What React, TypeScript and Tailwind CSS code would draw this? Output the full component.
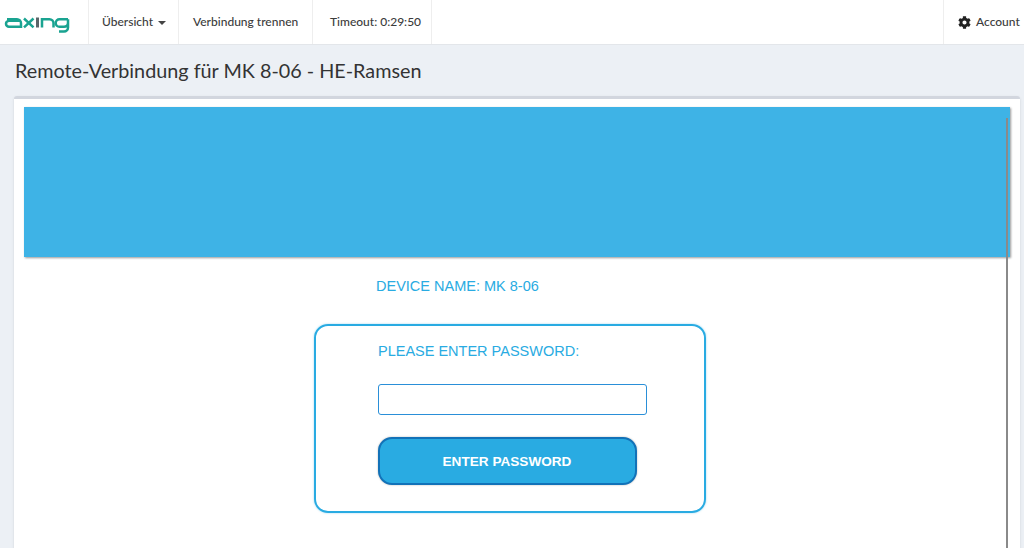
import type { ReactNode } from "react";
import { FaCog } from "react-icons/fa";

const navFont = "[font-family:'Lato',sans-serif]";

function AxingLogo() {
  return (
    <svg width="66" height="18" viewBox="0 0 66 18" fill="none" strokeWidth="2.5">
      {/* a */}
      <path d="M3 4.2h10a4 4 0 0 1 4 4v3.6H5a3 3 0 0 1 0-6h12" stroke="#1aa391" />
      {/* x */}
      <path d="M20 3.5l9.5 8.8M29.5 3.5L20 12.3" stroke="#1aa391" />
      {/* i */}
      <path d="M33.5 2.5v10" stroke="#5a6468" strokeWidth="3" />
      {/* n */}
      <path d="M38 12.5V4.2h7.5a4 4 0 0 1 4 4v4.3" stroke="#1aa391" />
      {/* g */}
      <path d="M64 4.2H55.5a3.8 3.8 0 0 0 0 7.6H60a4 4 0 0 0 4-4M64 4.2v8.3a4 4 0 0 1-4 4h-5" stroke="#1aa391" />
    </svg>
  );
}

function NavItem({ children, className = "" }: { children: ReactNode; className?: string }) {
  return (
    <div className={`flex h-full items-center border-r border-[#eeeeee] text-[12px] font-medium text-[#3c3c3c] ${className}`}>
      {children}
    </div>
  );
}

export default function App() {
  return (
    <div className="relative h-[548px] w-[1024px] overflow-hidden bg-[#ecf0f5]">
      <header className={`flex h-[45px] items-center border-b border-[#e3e6ea] bg-white ${navFont}`}>
        <div className="flex h-full w-[89px] items-center border-r border-[#eeeeee] pl-[4px] pt-[4px]">
          <AxingLogo />
        </div>
        <NavItem className="w-[90px] pl-[13px]">
          Übersicht
          <span className="ml-[5px] mt-[2px] border-x-[4px] border-t-[4px] border-x-transparent border-t-[#444444]" />
        </NavItem>
        <NavItem className="w-[134px] pl-[14px]">Verbindung trennen</NavItem>
        <NavItem className="w-[119px] pl-[17px]">Timeout: 0:29:50</NavItem>
        <div className="ml-auto flex h-full w-[81px] items-center border-l border-[#eeeeee] pl-[14px] text-[12px] font-medium text-[#3c3c3c]">
          <FaCog size={13} className="mr-[5px] text-[#222222]" />
          Account
        </div>
      </header>

      <h1 className={`mt-[10px] pl-[15px] text-[19.8px] leading-[30px] text-[#333333] ${navFont}`}>
        Remote-Verbindung für MK 8-06 - HE-Ramsen
      </h1>

      <main className="ml-[14px] mr-[4px] mt-[11px] h-[460px] rounded-t-[3px] border-t-[3px] border-[#d2d6de] bg-white px-[10px] pt-[8px] shadow-sm">
        <div className="h-[150px] bg-[#3eb3e6] shadow-[1px_1px_2px_rgba(0,0,0,0.4)]" />
        <p className="ml-[352px] mt-[21px] text-[14.5px] leading-[16px] text-[#29abe2] [font-family:'Liberation_Sans',sans-serif]">
          DEVICE NAME: MK 8-06
        </p>
        <section className="ml-[290px] mt-[30px] h-[189px] w-[392px] rounded-[14px] border-2 border-[#29abe2] pl-[62px] pt-[17px] shadow-[0_0_2px_rgba(41,171,226,0.5)] [font-family:'Liberation_Sans',sans-serif]">
          <label className="block text-[14.5px] leading-[16px] text-[#29abe2]">PLEASE ENTER PASSWORD:</label>
          <input
            type="password"
            className="mt-[25px] block h-[31px] w-[269px] rounded-[3px] border border-[#2a8fd8] bg-white outline-none"
          />
          <button className="mt-[22px] flex h-[48px] w-[259px] items-center justify-center rounded-[14px] border-2 border-[#1272b8] bg-[#29abe2] pr-[1px] pt-[2px] text-[13.6px] font-bold text-white shadow-[0_0_2px_rgba(0,0,0,0.3)]">
            ENTER PASSWORD
          </button>
        </section>
      </main>

      {/* scrollbar line of the embedded page */}
      <div className="absolute bottom-0 left-[1006px] top-[118px] w-[2px] bg-[#8a8a8a]" />
    </div>
  );
}
